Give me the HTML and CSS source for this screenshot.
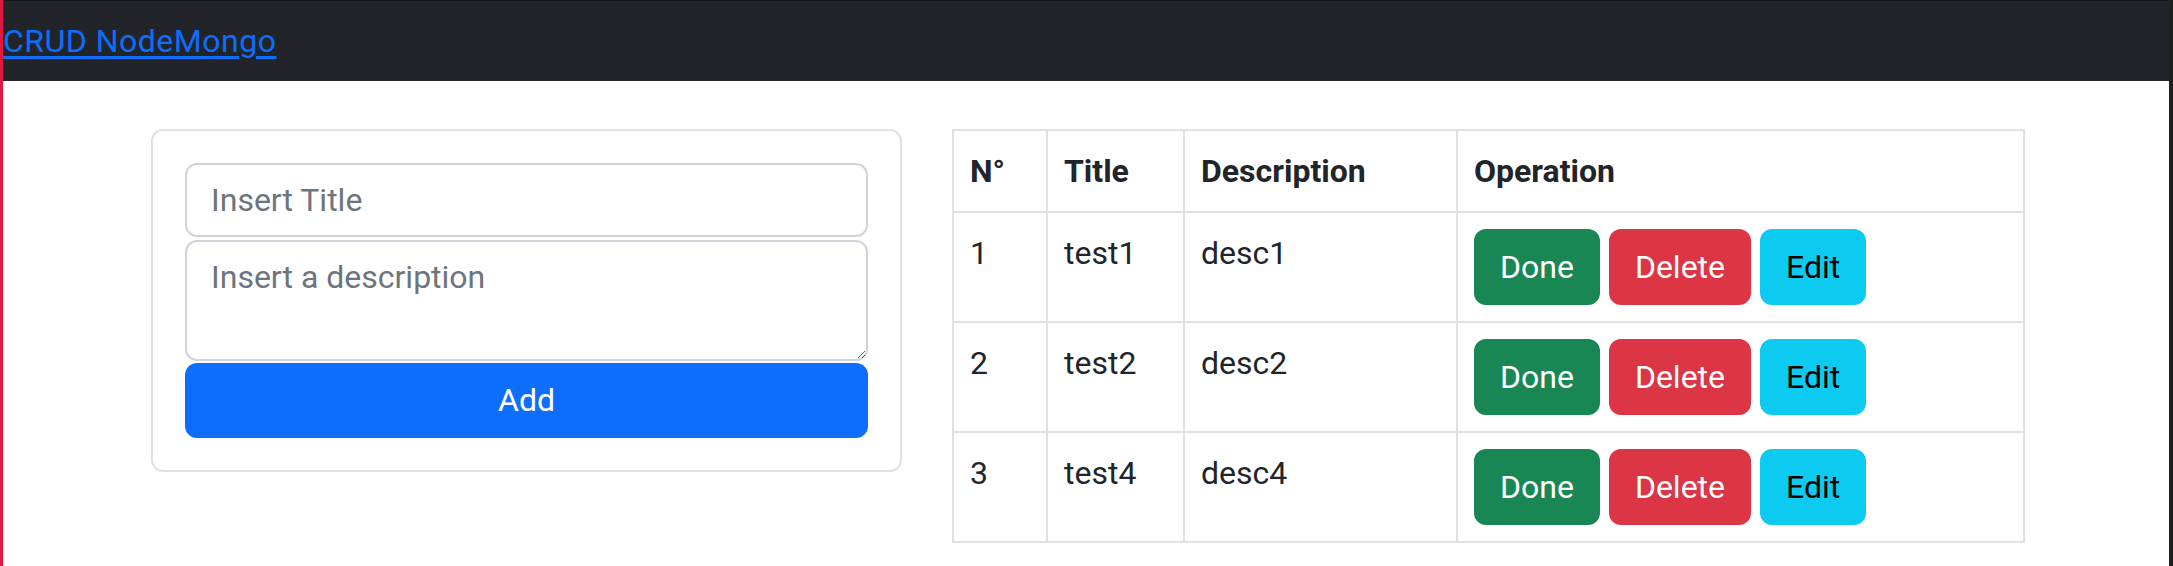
FILE: index.html
```html
<!DOCTYPE html>
<html lang="en">
<head>
<meta charset="utf-8">
<title>CRUD NodeMongo</title>
<link rel="stylesheet" href="styles.css">
</head>
<body>
<div class="frame">
  <div class="edge-left"></div>
  <div class="page">
    <nav class="navbar"><a href="#" class="brand">CRUD NodeMongo</a></nav>
    <main class="container">
      <section class="card">
        <form class="card-body">
          <input class="form-control" type="text" placeholder="Insert Title">
          <textarea class="form-control area" placeholder="Insert a description"></textarea>
          <button type="button" class="btn btn-primary btn-block">Add</button>
        </form>
      </section>
      <table class="table">
        <colgroup>
          <col class="c1"><col class="c2"><col class="c3"><col class="c4">
        </colgroup>
        <thead>
          <tr><th>N°</th><th>Title</th><th>Description</th><th>Operation</th></tr>
        </thead>
        <tbody>
          <tr>
            <td>1</td><td>test1</td><td>desc1</td>
            <td><div class="ops"><button class="btn btn-success">Done</button><button class="btn btn-danger">Delete</button><button class="btn btn-info">Edit</button></div></td>
          </tr>
          <tr>
            <td>2</td><td>test2</td><td>desc2</td>
            <td><div class="ops"><button class="btn btn-success">Done</button><button class="btn btn-danger">Delete</button><button class="btn btn-info">Edit</button></div></td>
          </tr>
          <tr>
            <td>3</td><td>test4</td><td>desc4</td>
            <td><div class="ops"><button class="btn btn-success">Done</button><button class="btn btn-danger">Delete</button><button class="btn btn-info">Edit</button></div></td>
          </tr>
        </tbody>
      </table>
    </main>
  </div>
  <div class="edge-right"></div>
</div>
</body>
</html>
```

FILE: styles.css
```css
* { box-sizing: border-box; }

html, body {
  margin: 0;
  padding: 0;
  background: #ffffff;
}

body {
  font-family: "Segoe UI", Roboto, "Liberation Sans", sans-serif;
  font-size: 32px;
  line-height: 48px;
  color: #212529;
}

.frame {
  display: flex;
  min-height: 100vh;
}

.edge-left {
  width: 3px;
  flex: none;
  background: #e2173f;
}

.edge-right {
  width: 4px;
  flex: none;
  background: #1e1f21;
}

.page {
  flex: 1;
  min-width: 0;
}

.navbar {
  height: 81px;
  border-top: 1px solid #131518;
  background: #212529;
  padding: 16px 0;
}

.brand {
  color: #0d6efd;
  letter-spacing: 0.5px;
  text-decoration: underline;
  text-underline-offset: 4px;
  text-decoration-thickness: 3px;
}

.container {
  display: grid;
  grid-template-columns: 751px 1071px;
  column-gap: 50px;
  align-items: start;
  margin: 48px 0 0 148px;
}

.card {
  border: 2px solid #dee2e6;
  border-radius: 12px;
  background: #fff;
}

.card-body {
  padding: 32px;
  display: flex;
  flex-direction: column;
  margin: 0;
}

.form-control {
  display: block;
  width: 100%;
  font: inherit;
  color: #212529;
  line-height: 46px;
  padding: 12px 24px;
  border: 2px solid #ced4da;
  border-radius: 12px;
  background: #fff;
  margin: 0 0 3px 0;
  outline: none;
}

.form-control::placeholder {
  color: #6c757d;
  opacity: 1;
}

.area {
  height: 121px;
  resize: vertical;
  margin-bottom: 2px;
}

.btn {
  font: inherit;
  line-height: 48px;
  padding: 12px 24px;
  border: 2px solid transparent;
  border-radius: 12px;
  cursor: pointer;
  text-align: center;
}

.btn-block {
  width: 100%;
  line-height: 47px;
}

.btn-primary { background: #0d6efd; border-color: #0d6efd; color: #fff; }
.btn-success { background: #198754; border-color: #198754; color: #fff; }
.btn-danger  { background: #dc3545; border-color: #dc3545; color: #fff; }
.btn-info    { background: #0dcaf0; border-color: #0dcaf0; color: #000; }

.table {
  width: 1071px;
  border-collapse: collapse;
  table-layout: fixed;
  vertical-align: top;
}

.c1 { width: 94px; }
.c2 { width: 137px; }
.c3 { width: 273px; }
.c4 { width: 567px; }

.table th,
.table td {
  border: 2px solid #dee2e6;
  padding: 16px;
  text-align: left;
  vertical-align: top;
}

.table th {
  font-weight: 700;
}

.ops {
  display: flex;
  gap: 9px;
}
```
